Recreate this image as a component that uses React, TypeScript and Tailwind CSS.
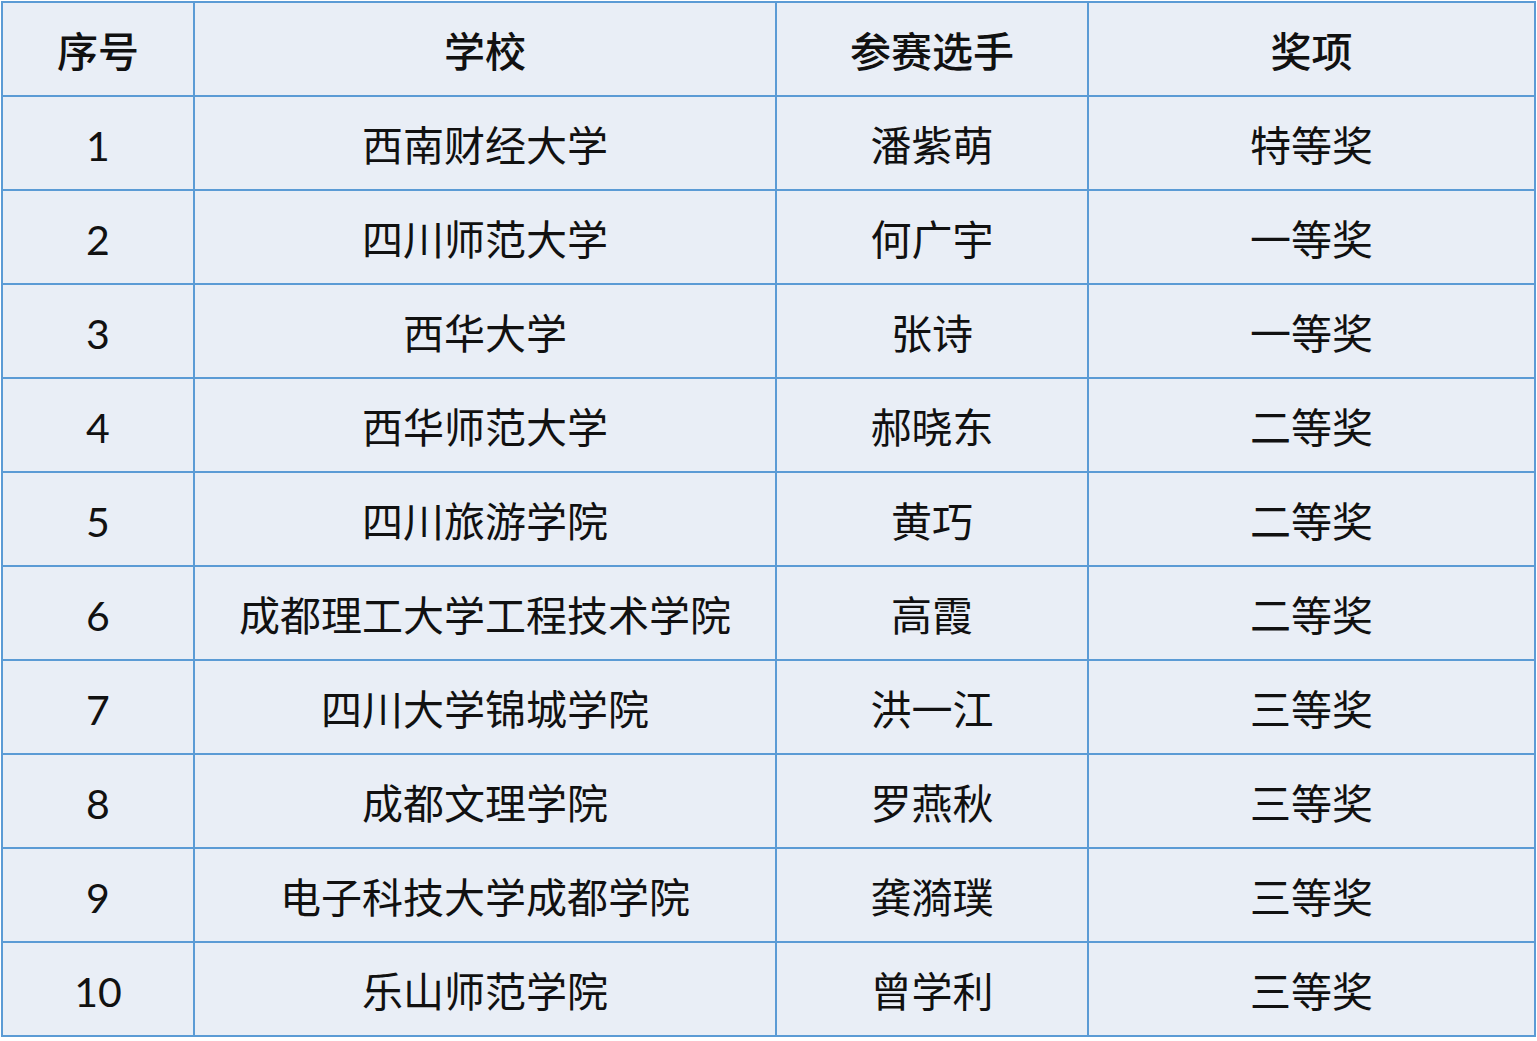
const rows: [string, string, string, string][] = [
  ["1", "西南财经大学", "潘紫萌", "特等奖"],
  ["2", "四川师范大学", "何广宇", "一等奖"],
  ["3", "西华大学", "张诗", "一等奖"],
  ["4", "西华师范大学", "郝晓东", "二等奖"],
  ["5", "四川旅游学院", "黄巧", "二等奖"],
  ["6", "成都理工大学工程技术学院", "高霞", "二等奖"],
  ["7", "四川大学锦城学院", "洪一江", "三等奖"],
  ["8", "成都文理学院", "罗燕秋", "三等奖"],
  ["9", "电子科技大学成都学院", "龚漪璞", "三等奖"],
  ["10", "乐山师范学院", "曾学利", "三等奖"],
];

const headers = ["序号", "学校", "参赛选手", "奖项"];

export default function App() {
  return (
    <div className="min-h-screen bg-white pl-px pt-px font-['Lato','Noto_Sans_CJK_SC',sans-serif] text-[#111]">
      <table className="table-fixed border-collapse bg-[#e9eef6] w-[1533px]">
        <colgroup>
          <col className="w-[192px]" />
          <col className="w-[582px]" />
          <col className="w-[312px]" />
          <col className="w-[447px]" />
        </colgroup>
        <thead>
          <tr className="h-[94px]">
            {headers.map((h) => (
              <th key={h} className="border-2 border-[#5b9bd5] pt-1 text-center align-middle text-[41px] font-medium leading-none">
                {h}
              </th>
            ))}
          </tr>
        </thead>
        <tbody>
          {rows.map((r) => (
            <tr key={r[0]} className="h-[94px]">
              {r.map((c, i) => (
                <td key={i} className="border-2 border-[#5b9bd5] pt-1 text-center align-middle text-[41px] leading-none">
                  {c}
                </td>
              ))}
            </tr>
          ))}
        </tbody>
      </table>
    </div>
  );
}
